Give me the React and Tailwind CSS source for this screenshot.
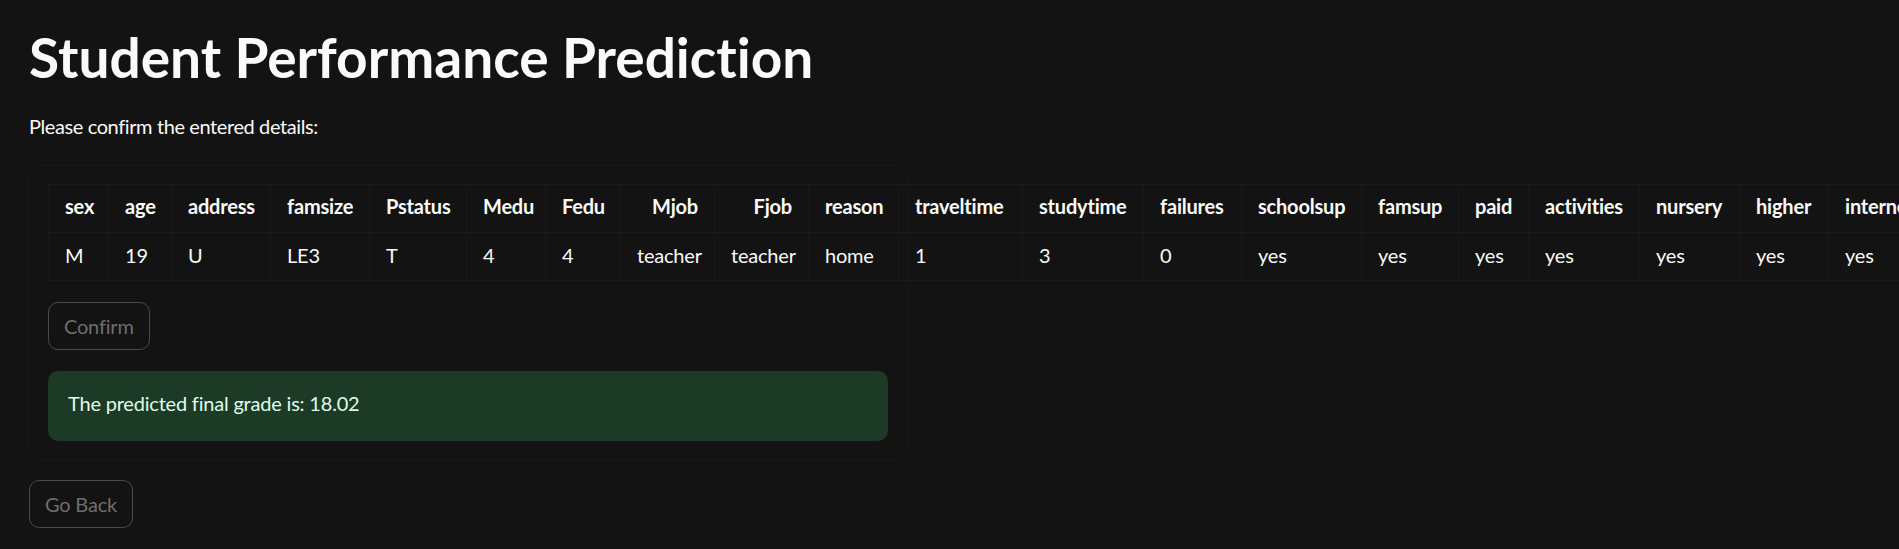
import React from "react";

const columns = [
  { name: "sex", value: "M", w: "w-[60px]" },
  { name: "age", value: "19", w: "w-[63px]" },
  { name: "address", value: "U", w: "w-[99px]" },
  { name: "famsize", value: "LE3", w: "w-[99px]" },
  { name: "Pstatus", value: "T", w: "w-[97px]" },
  { name: "Medu", value: "4", w: "w-[79px]" },
  { name: "Fedu", value: "4", w: "w-[75px]" },
  { name: "Mjob", value: "teacher", w: "w-[94px]", right: true },
  { name: "Fjob", value: "teacher", w: "w-[94px]", right: true },
  { name: "reason", value: "home", w: "w-[90px]" },
  { name: "traveltime", value: "1", w: "w-[124px]" },
  { name: "studytime", value: "3", w: "w-[121px]" },
  { name: "failures", value: "0", w: "w-[98px]" },
  { name: "schoolsup", value: "yes", w: "w-[120px]" },
  { name: "famsup", value: "yes", w: "w-[97px]" },
  { name: "paid", value: "yes", w: "w-[70px]" },
  { name: "activities", value: "yes", w: "w-[111px]" },
  { name: "nursery", value: "yes", w: "w-[100px]" },
  { name: "higher", value: "yes", w: "w-[89px]" },
  { name: "internet", value: "yes", w: "w-[100px]" },
  { name: "romantic", value: "no", w: "w-[110px]" },
  { name: "famrel", value: "4", w: "w-[90px]" },
];

function Button({ children }) {
  return (
    <button className="h-[48px] px-[15px] rounded-[10px] border border-[#4a4a4a] text-[20px] leading-[24px] text-[#6e6e6e] tracking-[-0.01em]">
      {children}
    </button>
  );
}

export default function App() {
  return (
    <div className="h-[549px] w-full overflow-hidden bg-[#131313] text-[#fafafa] font-['Lato',sans-serif] [font-variant-ligatures:none] pl-[29px] pt-[24px]">
      <h1 className="text-[55px] font-bold leading-[66px]">
        Student Performance Prediction
      </h1>
      <p className="mt-[20px] text-[20px] leading-[32px] tracking-[-0.02em]">
        Please confirm the entered details:
      </p>

      {/* form */}
      <div className="mt-[23px] w-[878px] border border-[#181818] rounded-[10px] p-[18px]">
        <div className="flex flex-col w-max border-l border-t border-[#191919] text-[20px] leading-[24px] tracking-[-0.01em]">
          <div className="flex">
            {columns.map((c) => (
              <div
                key={c.name}
                className={`${c.w} shrink-0 h-[48px] pt-[9px] px-[16px] font-bold border-r border-b border-[#191919] ${
                  c.right ? "text-right" : "text-left"
                }`}
              >
                {c.name}
              </div>
            ))}
          </div>
          <div className="flex">
            {columns.map((c) => (
              <div
                key={c.name}
                className={`${c.w} shrink-0 h-[48px] pt-[10px] px-[16px] border-r border-b border-[#191919]`}
              >
                {c.value}
              </div>
            ))}
          </div>
        </div>

        <div className="mt-[21px]">
          <Button>Confirm</Button>
        </div>

        <div className="mt-[21px] w-[840px] h-[70px] rounded-[10px] bg-[#1d3a27] px-[20px] pt-[16px] text-[20px] leading-[32px] text-[#dffde9] tracking-[-0.01em]">
          The predicted final grade is: 18.02
        </div>
      </div>

      <div className="mt-[20px]">
        <Button>Go Back</Button>
      </div>
    </div>
  );
}
